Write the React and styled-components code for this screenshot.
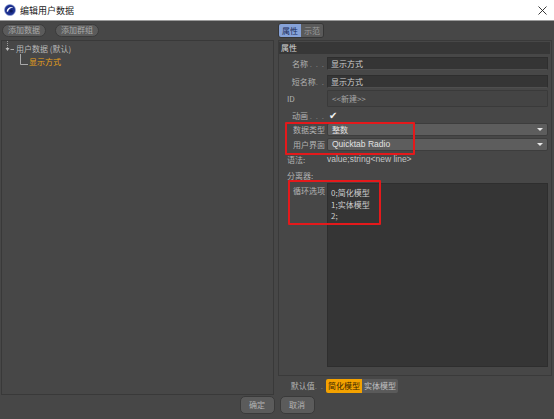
import styled, { createGlobalStyle } from "styled-components";

const Global = createGlobalStyle`
  html, body { margin: 0; padding: 0; background: #474747; }
  body { font-family: "Noto Sans CJK SC", "Noto Sans", sans-serif; }
`;

const Window = styled.div`
  width: 554px;
  height: 419px;
  display: flex;
  flex-direction: column;
  background: #474747;
  overflow: hidden;
  font-size: 8px;
  color: #b4b4b4;
`;

const TitleBar = styled.div`
  height: 21px;
  box-sizing: border-box;
  background: #fff;
  border-bottom: 1px solid #9c9c9c;
  display: flex;
  align-items: center;
  gap: 4px;
  padding: 0 7px 0 4px;
`;

const Title = styled.span`
  flex: 1;
  font-size: 9px;
  color: #1a1a1a;
`;

const Main = styled.div`
  flex: 1;
  display: flex;
  gap: 4px;
  padding: 2px 2px 1px 1px;
  min-height: 0;
`;

const LeftCol = styled.div`
  width: 273px;
  display: flex;
  flex-direction: column;
`;

const Toolbar = styled.div`
  display: flex;
  gap: 9px;
  height: 14px;
  align-items: center;
  padding-left: 1px;
  margin-bottom: 3px;
`;

const Pill = styled.div`
  height: 13px;
  box-sizing: border-box;
  padding: 0 5px;
  border-radius: 7px;
  background: #5b5b5b;
  border: 1px solid #3b3b3b;
  color: #a9a9a9;
  display: flex;
  align-items: center;
  line-height: 1;
`;

const TreePanel = styled.div`
  flex: 1;
  border: 1px solid #393939;
  padding-top: 1px;
`;

const TreeRow = styled.div`
  display: flex;
  align-items: flex-end;
  height: ${(p) => p.$h}px;
  padding-left: ${(p) => p.$indent}px;
  color: ${(p) => (p.$active ? "#eaa21a" : "#b8b8b8")};
  line-height: 1;
`;

const RightCol = styled.div`
  flex: 1;
  display: flex;
  flex-direction: column;
`;

const Tabs = styled.div`
  display: flex;
  align-self: flex-start;
  height: 15px;
  box-sizing: border-box;
  border: 1px solid #363636;
  border-radius: 3px;
  overflow: hidden;
  margin-bottom: 2px;
`;

const Tab = styled.div`
  padding: 0 3px;
  display: flex;
  align-items: center;
  background: ${(p) => (p.$on ? "#86a2d8" : "#5a5a5a")};
  color: ${(p) => (p.$on ? "#1b2c5a" : "#9c9c9c")};
  line-height: 1;
`;

const PropPanel = styled.div`
  position: relative;
  height: 336px;
  box-sizing: border-box;
  border: 1px solid #3a3a3a;
  padding: 1px 3px 0 0;
  display: flex;
  flex-direction: column;
`;

const Header = styled.div`
  height: 12px;
  background: #373737;
  color: #d6d6d6;
  display: flex;
  align-items: center;
  padding-left: 2px;
  margin-right: -2px;
  line-height: 1;
`;

const Row = styled.div`
  display: flex;
  align-items: ${(p) => (p.$top ? "flex-start" : "center")};
  height: ${(p) => p.$h}px;
  margin-top: ${(p) => p.$mt}px;
  flex: ${(p) => (p.$grow ? 1 : "none")};
`;

const Label = styled.div`
  width: 48px;
  flex: none;
  box-sizing: border-box;
  text-align: ${(p) => (p.$left ? "left" : "right")};
  padding: ${(p) => (p.$left ? "0 0 0 8px" : "0 2px 0 0")};
  color: #b2b2b2;
  white-space: nowrap;
  line-height: 1;
  ${(p) => p.$top && "padding-top: 4px;"}
`;

const Dots = styled.span`
  color: #7c7c7c;
  letter-spacing: 1px;
`;

const Input = styled.div`
  flex: 1;
  height: 100%;
  box-sizing: border-box;
  background: #353535;
  border: 1px solid #2e2e2e;
  border-bottom-color: #4e4e4e;
  border-radius: 1px;
  color: #cfcfcf;
  display: flex;
  align-items: center;
  padding-left: 3px;
  line-height: 1;
`;

const IdBox = styled(Input)`
  background: #444;
  border: 1px solid #3a3a3a;
  color: #a8a8a8;
  padding-left: 4px;
`;

const Select = styled.div`
  flex: 1;
  height: 100%;
  box-sizing: border-box;
  background: #5d5d5d;
  border: 1px solid #3d3d3d;
  border-radius: 2px;
  color: #e2e2e2;
  display: flex;
  align-items: center;
  justify-content: space-between;
  padding: 0 4px 0 4px;
  line-height: 1;
  font-family: ${(p) => (p.$latin ? '"Liberation Sans", sans-serif' : "inherit")};
  font-size: ${(p) => (p.$latin ? "8.5px" : "8px")};
`;

const Caret = styled.span`
  width: 0;
  height: 0;
  border-left: 3px solid transparent;
  border-right: 3px solid transparent;
  border-top: 3px solid #e8e8e8;
`;

const Value = styled.div`
  color: #c4c4c4;
  line-height: 1;
  font-family: ${(p) => (p.$latin ? '"Liberation Sans", sans-serif' : "inherit")};
  font-size: ${(p) => (p.$latin ? "8.5px" : "8px")};
`;

const Check = styled.span`
  color: #f2f2f2;
  font-size: 10px;
  font-family: "DejaVu Sans", sans-serif;
  line-height: 1;
  padding-left: 2px;
`;

const TextArea = styled.div`
  flex: 1;
  height: 100%;
  box-sizing: border-box;
  background: #353535;
  border: 1px solid #2e2e2e;
  color: #cdcdcd;
  padding: 3px 3px;
  line-height: 11.5px;
  white-space: pre;
`;

const Mark = styled.div`
  position: absolute;
  border: 2px solid #e4191b;
  border-radius: 1px;
  pointer-events: none;
`;

const DefaultRow = styled.div`
  flex: 1;
  display: flex;
  align-items: center;
`;

const Toggle = styled.div`
  display: flex;
  border-radius: 2px;
  overflow: hidden;
  height: 14px;
`;

const ToggleItem = styled.div`
  padding: 0 2px;
  display: flex;
  align-items: center;
  background: ${(p) => (p.$on ? "#f4a200" : "#5a5a5a")};
  color: ${(p) => (p.$on ? "#3b2600" : "#c0c0c0")};
  line-height: 1;
`;

const Footer = styled.div`
  height: 23px;
  display: flex;
  justify-content: center;
  align-items: flex-start;
  gap: 5px;
`;

const DlgButton = styled.div`
  width: 35px;
  height: 18px;
  box-sizing: border-box;
  border-radius: 5px;
  background: #5b5b5b;
  border: 1px solid #3a3a3a;
  color: #b4b4b4;
  display: flex;
  align-items: center;
  justify-content: center;
  line-height: 1;
`;

const Logo = () => (
  <svg width="12" height="12" viewBox="0 0 12 12">
    <circle cx="6" cy="6" r="5.5" fill="#1c2f8e" />
    <circle cx="6" cy="6" r="5.5" fill="none" stroke="#8fa3d8" strokeWidth="0.6" />
    <path d="M2.6 7.5 C3 3.6 6.8 2.2 9.2 3.4 C6.8 3.4 4.6 5 4 7.8 Z" fill="#ffffff" />
    <circle cx="7.2" cy="7" r="1.6" fill="#0d1a5a" />
  </svg>
);

const CloseIcon = () => (
  <svg width="9" height="9" viewBox="0 0 9 9">
    <path d="M0.5 0.5 L8.5 8.5 M8.5 0.5 L0.5 8.5" stroke="#222" strokeWidth="0.9" />
  </svg>
);

const RootBranch = () => (
  <svg width="11" height="12" viewBox="0 0 11 12" style={{ marginRight: 1 }}>
    <path d="M3.5 0 V8" stroke="#9a9a9a" strokeWidth="1" strokeDasharray="1 1" />
    <path d="M1.5 7 L5.5 7 L3.5 10 Z" fill="#bbbbbb" />
    <path d="M6.5 8.5 H10" stroke="#aaaaaa" strokeWidth="1" />
  </svg>
);

const ChildBranch = () => (
  <svg width="8" height="12" viewBox="0 0 8 12" style={{ marginRight: 1 }}>
    <path d="M0.5 0 V10.5 H8" stroke="#aaaaaa" strokeWidth="1" fill="none" />
  </svg>
);

export default function App() {
  return (
    <>
      <Global />
      <Window>
        <TitleBar>
          <Logo />
          <Title>编辑用户数据</Title>
          <CloseIcon />
        </TitleBar>
        <Main>
          <LeftCol>
            <Toolbar>
              <Pill>添加数据</Pill>
              <Pill>添加群组</Pill>
            </Toolbar>
            <TreePanel>
              <TreeRow $h={11} $indent={2}>
                <RootBranch />
                用户数据 (默认)
              </TreeRow>
              <TreeRow $h={13} $indent={18} $active>
                <ChildBranch />
                显示方式
              </TreeRow>
            </TreePanel>
          </LeftCol>
          <RightCol>
            <Tabs>
              <Tab $on>属性</Tab>
              <Tab>示范</Tab>
            </Tabs>
            <PropPanel>
              <Header>属性</Header>
              <Row $h={13} $mt={3}>
                <Label>
                  名称 <Dots>. . .</Dots>
                </Label>
                <Input>显示方式</Input>
              </Row>
              <Row $h={13} $mt={5}>
                <Label>
                  短名称<Dots>. .</Dots>
                </Label>
                <Input>显示方式</Input>
              </Row>
              <Row $h={17} $mt={2}>
                <Label $left>ID</Label>
                <IdBox>&lt;&lt;新建&gt;&gt;</IdBox>
              </Row>
              <Row $h={13} $mt={2}>
                <Label>
                  动画 <Dots>. . .</Dots>
                </Label>
                <Check>✔</Check>
              </Row>
              <Row $h={13} $mt={1}>
                <Label>数据类型</Label>
                <Select>
                  整数
                  <Caret />
                </Select>
              </Row>
              <Row $h={13} $mt={2}>
                <Label>用户界面</Label>
                <Select $latin>
                  Quicktab Radio
                  <Caret />
                </Select>
              </Row>
              <Row $h={13} $mt={2}>
                <Label $left>语法:</Label>
                <Value $latin>value;string&lt;new line&gt;</Value>
              </Row>
              <Row $h={13} $mt={3}>
                <Label $left>分离器:</Label>
              </Row>
              <Row $top $grow $mt={1}>
                <Label $top>循环选项</Label>
                <TextArea>{"0;简化模型\n1;实体模型\n2;"}</TextArea>
              </Row>
              <Row $h={8} $mt={0} />
              <Mark style={{ left: 6, top: 81, width: 126, height: 29 }} />
              <Mark style={{ left: 9, top: 139, width: 89, height: 41 }} />
            </PropPanel>
            <DefaultRow>
              <Label>
                默认值<Dots>. .</Dots>
              </Label>
              <Toggle>
                <ToggleItem $on>简化模型</ToggleItem>
                <ToggleItem>实体模型</ToggleItem>
              </Toggle>
            </DefaultRow>
          </RightCol>
        </Main>
        <Footer>
          <DlgButton>确定</DlgButton>
          <DlgButton>取消</DlgButton>
        </Footer>
      </Window>
    </>
  );
}
